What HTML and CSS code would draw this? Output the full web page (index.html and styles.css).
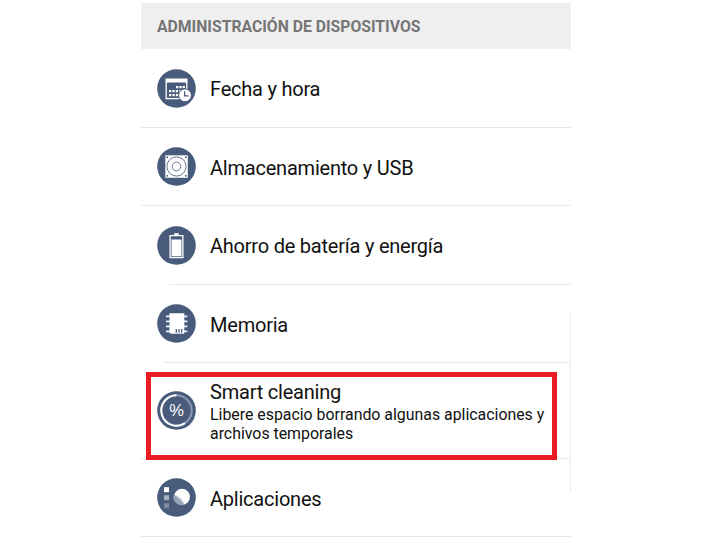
FILE: index.html
```html
<!DOCTYPE html>
<html lang="es">
<head>
<meta charset="utf-8">
<title>Administración de dispositivos</title>
<link rel="stylesheet" href="styles.css">
</head>
<body>
<main class="panel">
  <h1 class="heading">ADMINISTRACIÓN DE DISPOSITIVOS</h1>
  <ul class="list">
    <li class="row tall">
      <svg class="icon" viewBox="0 0 39 39"><circle cx="19.5" cy="19.5" r="19.3"/>
        <path class="w" d="M8.5 9.5h22v4h-22z"/>
        <path class="line" d="M9.2 13v16.7h14M29.8 13v8"/>
        <path class="w" d="M19 17h2.3v2.3H19zm3.3 0h2.3v2.3h-2.3zm3.3 0h2.3v2.3h-2.3zM12 21h2.3v2.3H12zm3.4 0h2.3v2.3h-2.3zm3.4 0h2.3v2.3h-2.3zm3.4 0h2.3v2.3h-2.3zM12 25h2.3v2.3H12zm3.4 0h2.3v2.3h-2.3zm3.4 0h2.3v2.3h-2.3z"/>
        <circle class="w rim" cx="28" cy="26.3" r="6.4"/>
        <path class="hand" d="M27.6 22.2v4.6h4"/>
      </svg>
      <span class="label">Fecha y hora</span>
    </li>
    <li class="row">
      <svg class="icon" viewBox="0 0 39 39"><circle cx="19.5" cy="19.5" r="19.3"/>
        <path class="w" d="M8.3 8.3h22.5v22.5H8.3z"/>
        <g class="ring"><circle cx="19.5" cy="19.5" r="9.6"/><circle cx="19.5" cy="19.5" r="4.3"/></g>
        <circle cx="10.2" cy="10.2" r=".9"/><circle cx="28.8" cy="10.2" r=".9"/><circle cx="10.2" cy="28.8" r=".9"/><circle cx="28.8" cy="28.8" r=".9"/>
      </svg>
      <span class="label">Almacenamiento y USB</span>
    </li>
    <li class="row tall inset-a">
      <svg class="icon" viewBox="0 0 39 39"><circle cx="19.5" cy="19.5" r="19.3"/>
        <path class="w" d="M17.3 7.2h4.4v2.5h-4.4z"/>
        <path class="line" d="M13.1 9.7h12.8v22H13.1z"/>
        <path class="w" d="M14.5 13.5h10v16.8h-10z"/>
      </svg>
      <span class="label">Ahorro de batería y energía</span>
    </li>
    <li class="row inset-b">
      <svg class="icon" viewBox="0 0 39 39"><circle cx="19.5" cy="19.5" r="19.3"/>
        <path class="pins" d="M9 12.4h21.4M9 17.4h21.4M9 22.4h21.4M9 27.3h21.4"/>
        <path class="w" d="M12.5 9.2h14.8v20.6H14l-1.5-1.5z"/>
        <path class="slots" d="M19.3 25v3.7M22 25v3.7M24.7 25v3.7"/>
      </svg>
      <span class="label">Memoria</span>
    </li>
    <li class="row featured">
      <svg class="icon" viewBox="0 0 39 39"><circle cx="19.5" cy="19.5" r="19.3"/>
        <circle class="track" cx="19.5" cy="19.5" r="15.2"/>
        <path class="arc" d="M19.5 4.3a15.2 15.2 0 1 0 8.5 27.8"/>
        <text class="percent" x="19.6" y="25.2">%</text>
      </svg>
      <div class="copy">
        <span class="label">Smart cleaning</span>
        <p class="detail">Libere espacio borrando algunas aplicaciones y<br>archivos temporales</p>
      </div>
      <span class="frame"></span>
      <span class="edge"></span>
    </li>
    <li class="row">
      <svg class="icon" viewBox="0 0 39 39"><circle cx="19.5" cy="19.5" r="19.3"/>
        <path class="w" d="M7 9.2h5v5H7z"/>
        <path class="mid" d="M7 17.2h5v5H7z"/>
        <path class="low" d="M7 25.2h5v5H7z"/>
        <circle class="w" cx="25" cy="18.8" r="8"/>
        <path class="pie" d="M17 16.5A8.3 8.3 0 0 0 27 26.8Q26.6 20 17 16.5z"/>
        <path class="pie2" d="M17 16.5l8 7.2 2 3.1A8 8 0 0 1 17 16.5z"/>
      </svg>
      <span class="label">Aplicaciones</span>
    </li>
  </ul>
</main>
</body>
</html>
```

FILE: styles.css
```css
* { box-sizing: border-box; }
body { margin: 0; background: #fff; color: #111; font-family: Roboto, "Liberation Sans", sans-serif; }
.panel { width: 430px; margin-left: 141px; padding-top: 3px; }
.heading { display: flex; align-items: center; height: 46px; margin: 0; padding: 0 16px; background: #efefef; color: #757575; font-size: 15.75px; font-weight: 700; white-space: nowrap; }
.list { margin: 0; padding: 0; list-style: none; }
.row { position: relative; display: flex; align-items: center; gap: 14.5px; height: 78px; padding: 0 0 1px 15.5px; background: linear-gradient(#e9e9e9, #e9e9e9) right bottom / 100% 1px no-repeat; }
.tall { height: 79px; }
.inset-a { background-size: 402px 1px; }
.inset-b { background-size: 407px 1px; }
.icon { flex: none; width: 39px; height: 39px; fill: #485b7b; }
.label { display: block; padding-top: 2px; font-size: 20px; line-height: 24px; letter-spacing: -0.22px; white-space: nowrap; }
.w { fill: #fff; }
.rim { stroke: #485b7b; stroke-width: 1; }
.line { fill: none; stroke: #fff; stroke-width: 1.3; }
.hand { fill: none; stroke: #485b7b; stroke-width: 1.2; }
.ring { fill: none; stroke: #6b7890; stroke-width: 1; }
.pins { stroke: #e5f3fa; stroke-width: 1.8; }
.slots { stroke: #485b7b; stroke-width: 1.3; }
.track { fill: none; stroke: #8a98b3; stroke-width: 2; }
.arc { fill: none; stroke: #fff; stroke-width: 2; }
.percent { fill: #fff; font-family: "Liberation Sans", sans-serif; font-size: 16.5px; text-anchor: middle; }
.mid { fill: #a7b0c1; }
.low { fill: #7c89a1; }
.pie { fill: #c0c6d4; }
.pie2 { fill: #98a3b8; }
.featured { height: 96px; }
.copy { padding-top: 3px; }
.copy .label { padding-top: 0; }
.detail { margin: 2px 0 0; font-size: 15.9px; line-height: 18.7px; letter-spacing: -0.01px; white-space: nowrap; }
.frame { position: absolute; left: 5px; top: 9px; width: 411px; height: 88px; border: 5px solid #e91c24; z-index: 1; }
.edge { position: absolute; right: 0; top: -51px; width: 1px; height: 180px; background: #ececec; }
```
